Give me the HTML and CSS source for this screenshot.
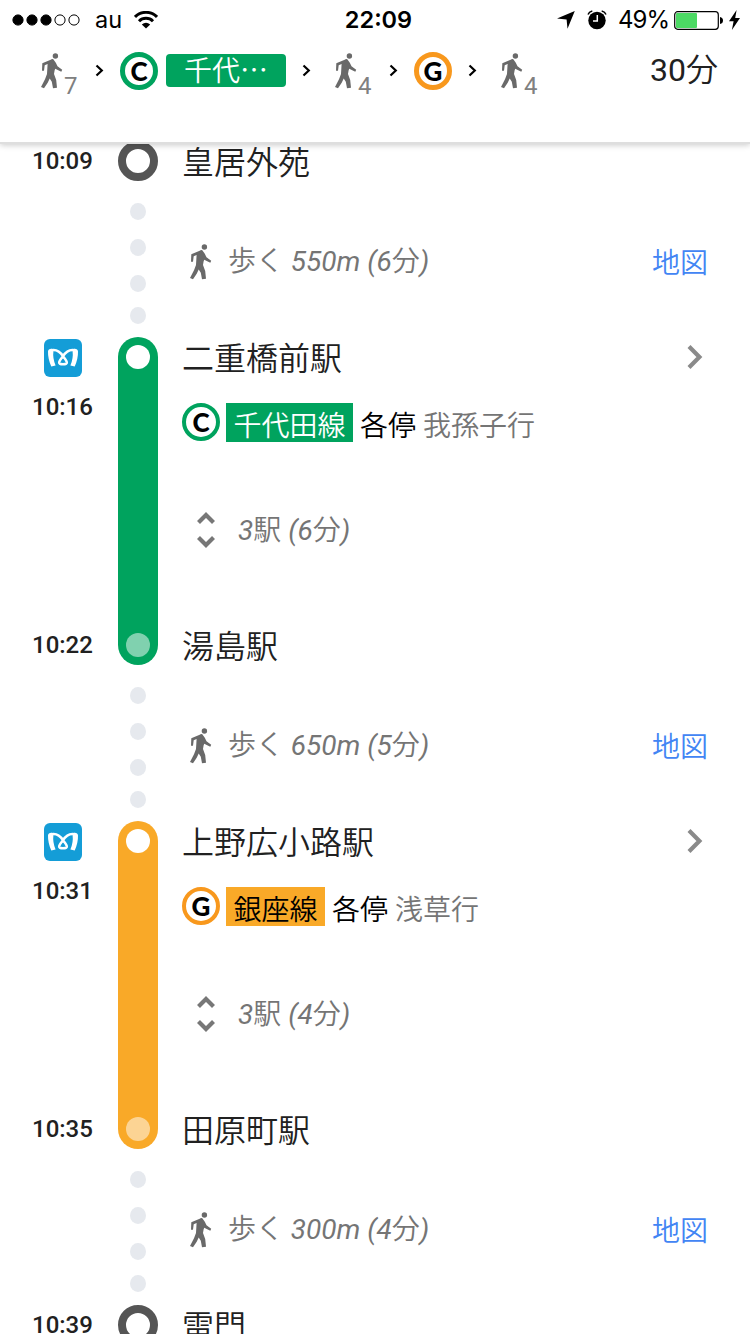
FILE: index.html
```
<!DOCTYPE html>
<html lang="ja">
<head>
<meta charset="utf-8">
<title>経路</title>
<link rel="stylesheet" href="styles.css">
</head>
<body>
<svg class="defs" aria-hidden="true">
  <symbol id="walk" viewBox="0 0 22 36"><circle cx="14.4" cy="3" r="2.7"/><path d="M1 17.7 1.3 10.3 9.7 6.7Q11 5.8 12.3 6.3L14.8 9.8 16.5 13.3 21.2 16.8 20.3 18.7 14.2 15.8 13.6 17.5 13 21 15.2 27 16 34.8 12 35.3 10.8 28.7 8.7 25.4 6.7 29.7 3 35.3 0 34 4 26.3 6 21 6.6 11 3.7 12.3 3 17.7Z"/></symbol>
  <symbol id="step" viewBox="0 0 9 13"><path d="M1.5 1.5 6.8 6.5 1.5 11.5" fill="none" stroke="#000" stroke-width="2.2"/></symbol>
  <symbol id="next" viewBox="0 0 16 24"><path d="M2 1.6 12.4 12 2 22.4" fill="none" stroke="#8a8a8a" stroke-width="4.2"/></symbol>
  <symbol id="expand" viewBox="0 0 18 36"><path d="M1.500 10.500 9 3 16.500 10.500M1.500 25.500 9 33 16.500 25.500" fill="none" stroke="#777" stroke-width="4.2"/></symbol>
  <symbol id="metro" viewBox="0 0 38 38"><rect width="38" height="38" rx="6" fill="#149dd7"/><path d="M4 12.5Q4.3 9.5 8 9.8L9.4 12.2Q8.500 19 11.600 26.600L7.300 27.600Q3.800 19.500 4 12.500ZM34 12.500Q33.700 9.500 30 9.800L28.600 12.200Q29.500 19 26.400 26.600L30.700 27.600Q34.200 19.500 34 12.500Z" fill="#fff"/><path d="M7 11.300C13.500 9.800 17 14 19 17.200 20.800 19.700 23 21.700 22.800 23.700 22.500 25.700 15.500 25.700 15.200 23.700 15 21.700 17.200 19.700 19 17.200 21 14 24.500 9.800 31 11.300" fill="none" stroke="#fff" stroke-width="2.500"/></symbol>
</svg>

<div class="screen">
  <header class="top">
    <div class="status">
      <div class="status-left">
        <svg class="signal" viewBox="0 0 68 12"><g stroke="#000"><circle cx="6" cy="6" r="5.1"/><circle cx="20" cy="6" r="5.1"/><circle cx="34" cy="6" r="5.1"/><g fill="none"><circle cx="48" cy="6" r="5.1"/><circle cx="62" cy="6" r="5.1"/></g></g></svg>
        <span class="carrier">au</span>
        <svg class="wifi" viewBox="0 0 24 18"><g fill="none" stroke="#000" stroke-width="3"><path d="M1 5.900A15.600 15.600 0 0 1 23 5.900"/><path d="M5 10.200A10 10 0 0 1 19 10.200"/></g><path d="M12 17.500 7.800 13.400Q12 10.200 16.200 13.400Z"/></svg>
      </div>
      <span class="clock">22:09</span>
      <div class="status-right">
        <svg class="locate" viewBox="0 0 18 18"><path d="M17.800 0 10.500 17.800 9.600 8.500 0 7.600Z"/></svg>
        <svg class="alarm" viewBox="0 0 20 20"><circle cx="10" cy="10.500" r="8.700"/><path d="M1 4.500Q2 1.800 5.300 1M19 4.500Q18 1.800 14.700 1" fill="none" stroke="#000" stroke-width="1.500"/><path d="M10.300 5V11H6" fill="none" stroke="#fff" stroke-width="1.500"/></svg>
        <span class="percent">49%</span>
        <svg class="battery" viewBox="0 0 49 19"><rect x=".7" y=".7" width="43.600" height="17.600" rx="3" fill="none" stroke="#000" stroke-width="1.200"/><rect x="2" y="2" width="21" height="15" rx="1" fill="#4cd964"/><path d="M46 6Q49 6.500 49 9.500T46 13Z"/></svg>
        <svg class="bolt" viewBox="0 0 11 20"><path d="M7.600 0 0 11.200H4.600L2.900 20 11 8H6.200Z"/></svg>
      </div>
    </div>
    <div class="summary">
      <svg class="walk"><use href="#walk"/></svg><span class="mins">7</span>
      <svg class="step"><use href="#step"/></svg>
      <span class="mark green">C</span>
      <span class="pill">千代…</span>
      <svg class="step"><use href="#step"/></svg>
      <svg class="walk second"><use href="#walk"/></svg><span class="mins">4</span>
      <svg class="step"><use href="#step"/></svg>
      <span class="mark orange">G</span>
      <svg class="step"><use href="#step"/></svg>
      <svg class="walk second"><use href="#walk"/></svg><span class="mins">4</span>
      <span class="total">30分</span>
    </div>
  </header>

  <main class="route">
    <section class="row place">
      <time>10:09</time><div class="ring"></div><h2>皇居外苑</h2>
    </section>
    <section class="row leg">
      <div class="dots"><i></i><i></i><i></i><i></i></div>
      <div class="walking"><svg class="walk"><use href="#walk"/></svg><span class="detail">歩く <em>550m (6分)</em></span><a class="map">地図</a></div>
    </section>

    <section class="row ride">
      <div class="times"><svg class="metro"><use href="#metro"/></svg><time>10:16</time><time class="arrive">10:22</time></div>
      <div class="bar green-bar"><i></i><i></i></div>
      <div class="info">
        <div class="head"><h2>二重橋前駅</h2><svg class="next"><use href="#next"/></svg></div>
        <div class="line"><span class="mark green">C</span><span class="label green-bar">千代田線</span><span class="kind">各停</span><span class="dest">我孫子行</span></div>
        <div class="stops"><svg class="expand"><use href="#expand"/></svg><em>3駅 (6分)</em></div>
        <h2 class="end">湯島駅</h2>
      </div>
    </section>
    <section class="row leg">
      <div class="dots"><i></i><i></i><i></i><i></i></div>
      <div class="walking"><svg class="walk"><use href="#walk"/></svg><span class="detail">歩く <em>650m (5分)</em></span><a class="map">地図</a></div>
    </section>

    <section class="row ride">
      <div class="times"><svg class="metro"><use href="#metro"/></svg><time>10:31</time><time class="arrive">10:35</time></div>
      <div class="bar orange-bar"><i></i><i></i></div>
      <div class="info">
        <div class="head"><h2>上野広小路駅</h2><svg class="next"><use href="#next"/></svg></div>
        <div class="line"><span class="mark orange">G</span><span class="label orange-bar">銀座線</span><span class="kind">各停</span><span class="dest">浅草行</span></div>
        <div class="stops"><svg class="expand"><use href="#expand"/></svg><em>3駅 (4分)</em></div>
        <h2 class="end">田原町駅</h2>
      </div>
    </section>
    <section class="row leg">
      <div class="dots"><i></i><i></i><i></i><i></i></div>
      <div class="walking"><svg class="walk"><use href="#walk"/></svg><span class="detail">歩く <em>300m (4分)</em></span><a class="map">地図</a></div>
    </section>

    <section class="row place">
      <time>10:39</time><div class="ring"></div><h2>雷門</h2>
    </section>
  </main>
</div>
</body>
</html>
```
FILE: styles.css
```
* { box-sizing: border-box; }
body {
  margin: 0;
  background: #fff;
  color: #212121;
  font-family: Roboto, "Noto Sans CJK JP DemiLight", "Noto Sans CJK JP", sans-serif;
  font-synthesis: none;
}
svg { display: block; flex: none; }
.defs { display: none; }
.screen {
  width: 750px;
  height: 1334px;
  overflow: hidden;
  display: flex;
  flex-direction: column;
}

/* Status bar and route summary */
.top {
  position: relative;
  z-index: 1;
  flex: none;
  height: 144px;
  background: #fff;
  border-bottom: 2px solid #dedede;
  box-shadow: 0 1px 6px rgba(0, 0, 0, .22);
}
.status {
  height: 40px;
  padding: 0 10px 0 12px;
  display: grid;
  grid-template-columns: 1fr auto 1fr;
  align-items: center;
  color: #000;
  font: 24px/40px Inter, sans-serif;
}
.status-left, .status-right { display: flex; align-items: center; }
.status-right { justify-content: flex-end; }
.signal { width: 68px; height: 12px; }
.carrier { margin-left: 15px; width: 27px; font-size: 23.5px; }
.wifi { width: 24px; height: 18px; margin-left: 12px; }
.clock { padding-left: 5px; font-size: 23.5px; font-weight: 600; }
.locate { width: 18px; height: 18px; }
.alarm { width: 20px; height: 20px; margin: 0 12px; }
.percent { width: 49px; margin-left: -1px; letter-spacing: -1px; white-space: nowrap; }
.battery { width: 49px; height: 19px; margin-left: 7px; }
.bolt { width: 11px; height: 20px; margin-left: 6px; }

.summary {
  height: 62px;
  padding: 0 32px 0 41px;
  display: flex;
  align-items: center;
}
.walk { width: 22px; height: 36px; fill: #696969; }
.mins {
  width: 15px;
  margin-left: 1px;
  padding-top: 30px;
  font-size: 24px;
  line-height: 30px;
  font-weight: 400;
  color: #808080;
}
.step { width: 9px; height: 13px; margin: 0 16px 2px; }
.summary .second { margin-left: 8px; }
.mark {
  width: 38px;
  height: 38px;
  flex: none;
  border: 5px solid;
  border-radius: 50%;
  display: grid;
  place-items: center;
  font: 900 26px/26px Lato, sans-serif;
}
.mark.green { border-color: #00a35e; }
.mark.orange { border-color: #f8981d; }
.mark { color: #000; }
.line .mark { border-width: 4px; line-height: 28px; }
.pill {
  width: 120px;
  height: 33px;
  margin: 0 0 2px 8px;
  border-radius: 4px;
  background: #00a35e;
  color: #fff;
  text-align: center;
  font: 28px/30px "Noto Sans CJK JP DemiLight", "Noto Sans CJK JP", sans-serif;
}
.total { margin: 0 0 2px auto; font-size: 32px; line-height: 40px; }

/* Timeline */
.route { flex: none; margin-top: -3px; }
.row { display: grid; grid-template-columns: 118px 40px 1fr; }
time {
  padding-left: 32px;
  font-size: 24px;
  line-height: 40px;
  font-weight: 500;
}
h2 { margin: 0; padding-top: 4px; font-size: 32px; line-height: 36px; font-weight: 350; }
.place { height: 40px; }
.place h2 { padding-left: 24px; }
.ring {
  width: 40px;
  height: 40px;
  border: 8px solid #555;
  border-radius: 50%;
}
.leg { height: 156px; }
.dots {
  grid-column: 2;
  padding-top: 22px;
  display: flex;
  flex-direction: column;
  align-items: center;
  gap: 19px;
}
.dots i { width: 16px; height: 17px; border-radius: 50%; background: #e6e9ee; }
.dots i:last-child { margin-top: -4px; }
.walking {
  height: 40px;
  margin-top: 61px;
  padding: 0 42px 0 32px;
  display: flex;
  align-items: center;
  font-size: 28px;
  line-height: 40px;
  font-weight: 350;
  color: #757575;
}
.detail { margin-left: 16px; }
em { font-weight: 400; font-style: italic; }
.map { margin-left: auto; padding-top: 3px; color: #4285f4; }

.ride { height: 328px; }
.times { display: flex; flex-direction: column; }
.metro { width: 38px; height: 38px; margin: 2px 0 10px 44px; }
.arrive { margin-top: auto; }
.bar {
  border-radius: 20px;
  padding: 8px;
  display: flex;
  flex-direction: column;
  justify-content: space-between;
}
.bar i { width: 24px; height: 24px; border-radius: 50%; background: #fff; }
.bar i:last-child { opacity: .5; }
.green-bar { background: #00a35e; color: #fff; }
.orange-bar { background: #f9a928; color: #000; }
.info { padding-left: 24px; display: flex; flex-direction: column; }
.head { display: flex; align-items: center; justify-content: space-between; }
.next { width: 16px; height: 24px; margin-right: 47px; }
.line {
  height: 42px;
  margin-top: 26px;
  display: flex;
  font-size: 28px;
  line-height: 47px;
  font-weight: 350;
}
.label { margin-left: 6px; height: 39px; padding: 0 7.5px; }
.kind { margin-left: 7px; color: #000; font-weight: 400; }
.dest { margin-left: 7px; color: #757575; }
.stops {
  height: 40px;
  margin-top: 65px;
  padding-left: 15px;
  display: flex;
  align-items: center;
  gap: 23px;
  font-size: 28px;
  line-height: 36px;
  color: #757575;
}
.stops em { margin-top: 1px; }
.expand { width: 18px; height: 36px; }
.end { margin-top: auto; }
```
